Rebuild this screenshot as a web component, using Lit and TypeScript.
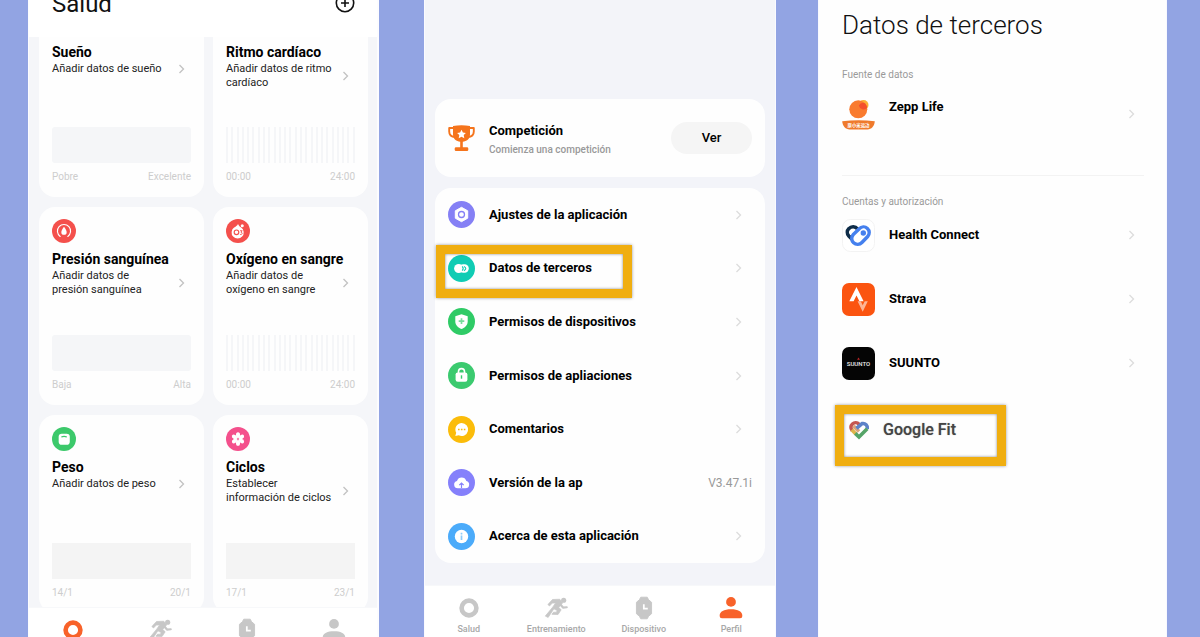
import { LitElement, html, css, svg, nothing, TemplateResult } from "lit";
import { customElement, property } from "lit/decorators.js";
import { classMap } from "lit/directives/class-map.js";

const reset = css`
  * { box-sizing: border-box; margin: 0; padding: 0; }
  a { color: inherit; text-decoration: none; }
  ul { list-style: none; }
  svg { display: block; flex: none; }
`;

const chevron = (dark = false) => html`
  <svg width="8" height="12" viewBox="0 0 8 12" fill="none" stroke=${dark ? "#c2c2c2" : "#dcdcdc"} stroke-width="1.3" aria-hidden="true">
    <path d="M1.500 2 5.500 6l-4 4" />
  </svg>`;

const disc = (size: number, color: string, glyph: TemplateResult) => html`
  <svg width=${size} height=${size} viewBox="0 0 27 27" aria-hidden="true">
    <circle cx="13.500" cy="13.500" r="13.500" fill=${color} />${glyph}
  </svg>`;

const glyphs: Record<string, TemplateResult> = {
  pressure: svg`<path d="M9.200 19.600a7.400 7.400 0 1 1 8.600 0" fill="none" stroke="#fff" stroke-width="1.300" stroke-linecap="round"/><path d="M13.500 8.800c1.800 2.600 3 4.200 3 6a3 3 0 0 1-6 0c0-1.800 1.200-3.400 3-6z" fill="#fff"/>`,
  oxygen: svg`<path d="M13.500 5.500c1 2.200 2.200 3 3.600 4.200a6.800 6.800 0 1 1-8 0c1.600-1.300 3.600-2.200 4.400-4.200z" fill="#fff"/><circle cx="18.300" cy="7.500" r="1.700" fill="#fff"/><circle cx="11.800" cy="15" r="2.600" fill="none" stroke="#f4504c" stroke-width="1.300"/><path d="M15.800 13.200h2.400l-1.300 1.700c1.800.1 1.700 2.500-.2 2.500h-1" fill="none" stroke="#f4504c" stroke-width="1"/>`,
  weight: svg`<rect x="7.500" y="7.500" width="12.500" height="12.500" rx="3.500" fill="#fff"/><path d="M10.500 11.300q3-1.500 6.200 0" fill="none" stroke="#3cc96b" stroke-width="1.300"/>`,
  cycle: svg`${[0, 60, 120, 180, 240, 300].map((a) => svg`<ellipse cx="13.500" cy="9" rx="2.300" ry="3.200" fill="#fff" transform="rotate(${a} 13.500 13.500)"/>`)}<circle cx="13.500" cy="13.500" r="2" fill="#fff"/><circle cx="13.500" cy="13.500" r="1" fill="#f4508c"/>`,
  settings: svg`<path d="M13.500 6.300l6.200 3.500v7.400l-6.200 3.500-6.200-3.500V9.800z" fill="#fff" stroke="#fff" stroke-linejoin="round"/><circle cx="13.500" cy="13.500" r="3" fill="none" stroke="#8580f5" stroke-width="1.300"/>`,
  third: svg`<circle cx="10.700" cy="13.500" r="4.600" fill="#fff"/><rect x="11" y="9.300" width="9.800" height="8.400" rx="4.200" fill="#fff"/><path d="M14.200 11.400q2 2.100 0 4.300M16 11.400q3.600 2.100 0 4.300" fill="none" stroke="#10ccb4" stroke-width="1.100"/>`,
  shield: svg`<path d="M13.500 6.200l6.200 2v5.300c0 3.600-2.600 6-6.200 7.500-3.600-1.500-6.200-3.900-6.200-7.500V8.200z" fill="#fff"/><path d="M13.500 10.300v5.600M10.700 13.100h5.600" stroke="#2fcb66" stroke-width="1.700" opacity=".65"/>`,
  lock: svg`<path d="M10.500 11V9.600a3 3 0 0 1 6 0V11" fill="none" stroke="#fff" stroke-width="1.600"/><rect x="7.600" y="10.400" width="11.800" height="9.400" rx="2.200" fill="#fff"/><path d="M13.500 13.300v3.400" stroke="#3bca6f" stroke-width="1.400"/>`,
  chat: svg`<path d="M13.700 7a6.500 6.500 0 1 1-3 12.300L7.300 20l.9-3.300A6.500 6.500 0 0 1 13.700 7z" fill="#fff"/><path d="M10 13.500h1.600M12.900 13.500h1.600M15.800 13.500h1.600" stroke="#fbbc0a" stroke-width="1.400"/>`,
  cloud: svg`<path d="M9.800 19.200a3.700 3.700 0 0 1-.8-7.300 4.900 4.900 0 0 1 9.300 0 3.700 3.700 0 0 1-.8 7.300z" fill="#fff"/><path d="M13.500 19v-4.500M11.300 16.200l2.200-2.200 2.200 2.200" fill="none" stroke="#8580fb" stroke-width="1.200"/>`,
  info: svg`<circle cx="13.500" cy="13.500" r="6.700" fill="#fff"/><path d="M13.500 12.500v4.600M13.500 9.700v1.700" stroke="#8ccbfa" stroke-width="1.700"/>`,
};

const tabShapes: Record<string, TemplateResult> = {
  salud: svg`<circle cx="12" cy="12" r="8" fill="none" stroke="currentColor" stroke-width="5"/>`,
  entrenamiento: svg`<circle cx="20.300" cy="3.600" r="2.800" fill="currentColor"/><path d="M8.200 2.800 16 2.500l3.300 3.800-4.300 5.200 2.600 2.400-3.400 5.200-6.600-.2 1.600-2.300 3.300-.1.800-1.700-3.600-1.900L3.500 22.200.400 20.800l8-9.700 3.200-4.600-3.600.2-3 3.100-1.800-1.500z" fill="currentColor" stroke="currentColor" stroke-width=".8" stroke-linejoin="round"/><path d="M17 8.500l2.600 3 4-.3" fill="none" stroke="currentColor" stroke-width="2.400" stroke-linecap="round" stroke-linejoin="round"/>`,
  dispositivo: svg`<path d="M8.500.300h7l1.500 2.800 3.200 2.700v12.400L17 20.900l-1.500 2.800h-7L7 20.900l-3.200-2.700V5.800L7 3.100z" fill="currentColor" stroke="currentColor" stroke-linejoin="round"/><path d="M11.800 8v4.800h4.300" fill="none" stroke="#fff" stroke-width="1.900"/>`,
  perfil: svg`<circle cx="12" cy="5.400" r="5.300" fill="currentColor"/><path d="M-.3 20.600c0-4.800 4.600-7.200 12.300-7.200s12.300 2.400 12.300 7.200q0 2.400-2.400 2.400H2.100q-2.400 0-2.400-2.400z" fill="currentColor"/>`,
};

@customElement("tab-bar")
class TabBar extends LitElement {
  @property() active = "salud";
  @property({ type: Boolean }) compact = false;

  static styles = [reset, css`
    :host { display: block; flex: none; background: #fff; color: #c7c7c7; border-top: 1px solid #f7f8fa; }
    .bar { display: grid; grid-template-columns: repeat(4, 1fr); height: 51px; padding-top: 10px; }
    .bar.compact { height: 29px; overflow: hidden; }
    .tab { display: flex; flex-direction: column; align-items: center; gap: 3px; font: 500 9px/12px Roboto, sans-serif; color: #a8a8a8; }
    .tab svg { color: #c7c7c7; }
    .tab.active svg { color: #f8622a; }
  `];

  render() {
    const tabs = ["Salud", "Entrenamiento", "Dispositivo", "Perfil"];
    return html`<nav class=${classMap({ bar: true, compact: this.compact })}>
      ${tabs.map((t) => {
        const key = t.toLowerCase();
        return html`<a class=${classMap({ tab: true, active: key === this.active })} href="#${key}" aria-label=${t}>
          <svg width="24" height="24" viewBox="-1 -1 26 26" aria-hidden="true">${tabShapes[key]}</svg>
          ${this.compact ? nothing : html`<span>${t}</span>`}
        </a>`;
      })}
    </nav>`;
  }
}

interface Metric {
  title: string; sub: string; from: string; to: string;
  icon?: string; color?: string; chart: "block" | "stripes" | "flat";
}

const metrics: Metric[] = [
  { title: "Sueño", sub: "Añadir datos de sueño", from: "Pobre", to: "Excelente", chart: "block" },
  { title: "Ritmo cardíaco", sub: "Añadir datos de ritmo\ncardíaco", from: "00:00", to: "24:00", chart: "stripes" },
  { title: "Presión sanguínea", sub: "Añadir datos de\npresión sanguínea", from: "Baja", to: "Alta", icon: "pressure", color: "#f4504c", chart: "block" },
  { title: "Oxígeno en sangre", sub: "Añadir datos de\noxígeno en sangre", from: "00:00", to: "24:00", icon: "oxygen", color: "#f4504c", chart: "stripes" },
  { title: "Peso", sub: "Añadir datos de peso", from: "14/1", to: "20/1", icon: "weight", color: "#3cc96b", chart: "flat" },
  { title: "Ciclos", sub: "Establecer\ninformación de ciclos", from: "17/1", to: "23/1", icon: "cycle", color: "#f4508c", chart: "flat" },
];

@customElement("health-screen")
class HealthScreen extends LitElement {
  static styles = [reset, css`
    :host { display: flex; flex-direction: column; min-width: 0; overflow: hidden; background: #f5f6f9; border: solid #fcfcff; border-width: 0 2px 0 1px; font-family: Roboto, sans-serif; color: #000; }
    .head { display: flex; flex: none; justify-content: space-between; align-items: flex-end; height: 37px; padding: 0 22px 17px 23px; background: #fff; }
    h1 { font-size: 24px; line-height: 32px; font-weight: 400; color: #111; }
    .add { border: 0; background: none; margin-bottom: 7px; }
    .cards { flex: 1; min-height: 0; overflow: hidden; display: grid; grid-template-columns: 165fr 155fr; grid-template-rows: 160px 198px 198px; gap: 10px 9px; padding: 0 9px 0 10px; }
    .card { display: flex; flex-direction: column; background: #fefefe; border-radius: 16px; padding: 12px 13px 14px 13px; min-width: 0; }
    .card.cut { border-radius: 0 0 16px 16px; padding-top: 6px; }
    .card svg + h2 { margin-top: 7px; }
    h2 { font-size: 14px; line-height: 18px; font-weight: 700; white-space: nowrap; }
    .sub { display: flex; align-items: center; justify-content: space-between; margin-top: 1px; font-size: 11px; line-height: 14px; color: #222; padding-right: 5px; }
    .sub span { white-space: pre; }
    .chart { height: 36px; margin-top: auto; }
    .block { background: #f5f6f8; border-radius: 3px; }
    .flat { background: #f4f4f4; }
    .stripes { display: flex; justify-content: space-between; }
    .stripes i { width: 2px; background: #f5f6f8; }
    .range { display: flex; justify-content: space-between; margin-top: 8px; font-size: 10px; line-height: 12px; color: #cdcdcd; }
  `];

  render() {
    return html`
      <header class="head">
        <h1>Salud</h1>
        <button class="add" aria-label="Añadir">
          <svg width="20" height="20" viewBox="0 0 20 20" fill="none" stroke="#111" stroke-width="1.600"><circle cx="10" cy="10" r="8.700"/><path d="M10 6v8M6 10h8"/></svg>
        </button>
      </header>
      <main class="cards">
        ${metrics.map((m) => html`
          <a class=${classMap({ card: true, cut: !m.icon })} href="#">
            ${m.icon ? disc(24, m.color!, glyphs[m.icon]) : nothing}
            <h2>${m.title}</h2>
            <p class="sub"><span>${m.sub}</span>${chevron(true)}</p>
            <div class="chart ${m.chart}">${m.chart === "stripes" ? Array.from({ length: 25 }, () => html`<i></i>`) : nothing}</div>
            <p class="range"><span>${m.from}</span><span>${m.to}</span></p>
          </a>`)}
      </main>
      <tab-bar active="salud" compact></tab-bar>`;
  }
}

const options = [
  { label: "Ajustes de la aplicación", icon: "settings", color: "#8580f5" },
  { label: "Datos de terceros", icon: "third", color: "#10ccb4", marked: true },
  { label: "Permisos de dispositivos", icon: "shield", color: "#2fcb66" },
  { label: "Permisos de apliaciones", icon: "lock", color: "#3bca6f" },
  { label: "Comentarios", icon: "chat", color: "#fbbc0a" },
  { label: "Versión de la ap", icon: "cloud", color: "#8580fb", value: "V3.47.1i" },
  { label: "Acerca de esta aplicación", icon: "info", color: "#4babfa" },
];

@customElement("profile-screen")
class ProfileScreen extends LitElement {
  static styles = [reset, css`
    :host { display: flex; flex-direction: column; min-width: 0; background: #f3f4f9; border: solid #fafaff; border-width: 0 1px; font-family: Roboto, sans-serif; color: #000; }
    .body { flex: 1; display: flex; flex-direction: column; gap: 11px; padding: 99px 10px 0; }
    .card { background: #fefefe; border-radius: 16px; }
    .contest { display: flex; align-items: center; gap: 14px; height: 78px; padding: 0 13px; }
    .text { flex: 1; padding-top: 3px; }
    h2, .label { font-size: 13px; line-height: 18px; font-weight: 700; }
    .text p { margin-top: 2px; font-size: 10px; line-height: 16px; font-weight: 500; color: #999; }
    .view { width: 81px; height: 32px; border: 0; border-radius: 16px; background: #f5f5f5; font: 500 13px/16px Roboto, sans-serif; color: #000; }
    .list { display: flex; flex-direction: column; height: 375px; }
    .item { flex: 1; display: flex; position: relative; }
    .link { flex: 1; display: flex; align-items: center; gap: 14px; padding: 0 13px; }
    .label { flex: 1; }
    .link > svg:last-child { margin-right: 9px; }
    .value { font-size: 12px; color: #999; }
    .mark { position: absolute; left: 1px; top: 3px; width: 196px; height: 53px; border: 9px solid #f0ae10; box-shadow: 0 0 3px #0006, inset 0 0 3px #0007; pointer-events: none; }
  `];

  render() {
    return html`
      <main class="body">
        <section class="card contest">
          <svg width="27" height="27" viewBox="0 0 27 27" aria-hidden="true">
            <path d="M6 3H1.200v3.500c0 3.500 2.500 5.300 6 5.500M21 3h4.800v3.500c0 3.500-2.500 5.300-6 5.500" fill="none" stroke="#f5741c" stroke-width="1.900" stroke-linejoin="round"/>
            <path d="M5 1q8.500-1.500 17 0v8.500c0 4.500-3.500 6.800-7.200 7.200v5.600H19q1.300 0 1.300 1.200v1.300q0 1.200-1.300 1.200H8q-1.300 0-1.300-1.200v-1.300q0-1.200 1.300-1.200h4.200v-5.600C8.500 16.300 5 14 5 9.500z" fill="#f5741c"/>
            <path d="M13.500 4.800l1.400 2.800 3 .4-2.200 2.100.6 3.100-2.800-1.500-2.800 1.500.6-3.100L9.100 8l3-.4z" fill="#fff"/>
          </svg>
          <div class="text"><h2>Competición</h2><p>Comienza una competición</p></div>
          <button class="view">Ver</button>
        </section>
        <ul class="card list">
          ${options.map((o) => html`
            <li class="item">
              <a class="link" href="#">
                ${disc(27, o.color, glyphs[o.icon])}
                <span class="label">${o.label}</span>
                ${o.value ? html`<span class="value">${o.value}</span>` : chevron()}
              </a>
              ${o.marked ? html`<span class="mark"></span>` : nothing}
            </li>`)}
        </ul>
      </main>
      <tab-bar active="perfil"></tab-bar>`;
  }
}

const zepp = html`
  <svg width="33" height="33" viewBox="0 0 33 33" aria-hidden="true">
    <circle cx="21.500" cy="7" r="5" fill="#fbb034"/><circle cx="16.300" cy="11.300" r="9" fill="#f97b2f"/>
    <path d="M16.800 7.500a5 5 0 0 1 6.500-2 9 9 0 0 1 1.800 4.500 5 5 0 0 1-8.300-2.500z" fill="#f4502c"/>
    <path d="M.2 23.300q16.300-2 32.600 0c-.4 5-3.500 8.200-7.300 8.200h-18C3.700 31.500.6 28.300.2 23.300z" fill="#ef7a2c"/>
    <text x="16.500" y="28.700" text-anchor="middle" font-size="4.400" font-family="Noto Sans CJK SC, sans-serif" fill="#fff">原小米运动</text>
  </svg>`;

const healthConnect = html`
  <svg width="33" height="33" viewBox="0 0 33 33" aria-hidden="true">
    <rect x=".5" y=".5" width="32" height="32" rx="8" fill="#fff" stroke="#f3f3f3"/>
    <path d="M15.500 9.800a5.600 5.600 0 0 0-8.600-.2 5.300 5.300 0 0 0-.1 7.400l4 4" fill="none" stroke="#0e2c48" stroke-width="3.600"/>
    <path d="M11.300 15.500l6-5.800a5.700 5.700 0 0 1 8.400 7.800l-5.800 6a5.800 5.800 0 0 1-8.600-8z" fill="#fff" stroke="#4580ee" stroke-width="3.400"/>
    <circle cx="21.300" cy="14" r="2.700" fill="#4580ee"/>
  </svg>`;

const strava = html`
  <svg width="33" height="33" viewBox="0 0 33 33" aria-hidden="true">
    <rect width="33" height="33" rx="7" fill="#fb5410"/>
    <path d="M14.500 4 7.300 18.200h4.300l2.900-5.700 2.900 5.700h4.200z" fill="#fff"/>
    <path d="M15.600 18.300h3.200l1.900 4 2-4h3.100l-5.100 10.500z" fill="#fdb596"/>
  </svg>`;

const suunto = html`
  <svg width="33" height="33" viewBox="0 0 33 33" aria-hidden="true">
    <rect width="33" height="33" rx="7" fill="#050505"/>
    <path d="M16.500 10.500l1.400 2.200h-2.800z" fill="#c02626"/>
    <text x="16.500" y="18.800" text-anchor="middle" font-size="6" font-weight="500" font-family="Roboto, sans-serif" fill="#eee">SUUNTO</text>
  </svg>`;

const fit = html`
  <svg width="22" height="20" viewBox="0 0 22 20" fill="none" stroke-width="3.600" aria-hidden="true">
    <path d="M11 11.500 5.500 6" stroke="#d9a57a"/>
    <path d="M4.200 10.500a4.600 4.600 0 0 1 6.800-6.300l1 1" stroke="#c4564f"/>
    <path d="M8.500 8.300 14 3.600a4.400 4.400 0 0 1 5.300 5.300" stroke="#5c82c8"/>
    <path d="M3.800 9.800l4 4.200" stroke="#ddb44a"/>
    <path d="M19.200 8.800 11 17 7.300 13.400" stroke="#55a468"/>
  </svg>`;

@customElement("sources-screen")
class SourcesScreen extends LitElement {
  static styles = [reset, css`
    :host { display: block; min-width: 0; background: #fefefe; border: solid #f8f9ff; border-width: 0 1px; padding: 9px 22px 0 23px; font-family: Roboto, sans-serif; color: #000; }
    h1 { font-size: 26px; line-height: 32px; font-weight: 300; color: #111; }
    h2 { font-size: 10px; line-height: 14px; font-weight: 400; color: #9a9a9a; }
    .first { margin-top: 27px; padding-bottom: 29px; border-bottom: 1px solid #f3f3f3; }
    .second { margin-top: 19px; }
    .row { display: flex; align-items: center; gap: 14px; height: 64px; padding-right: 8px; font-size: 13px; line-height: 18px; font-weight: 700; }
    .row span { flex: 1; }
    .row.raised span { align-self: flex-start; padding-top: 16px; }
    .second ul { margin-top: -6px; }
    .fit { display: flex; align-items: center; gap: 13px; width: 171px; height: 61px; margin: 10px 0 0 -7px; padding: 0 4px 11px; border: 9px solid #f0ae10; box-shadow: 0 0 3px #0006, inset 0 0 3px #0007; font-size: 16px; line-height: 18px; font-weight: 500; color: #444; text-shadow: 0 0 1px #4448; }
  `];

  render() {
    const row = (icon: TemplateResult, name: string, raised = false) => html`
      <a class=${classMap({ row: true, raised })} href="#">${icon}<span>${name}</span>${chevron()}</a>`;
    return html`
      <h1>Datos de terceros</h1>
      <section class="first"><h2>Fuente de datos</h2>${row(zepp, "Zepp Life", true)}</section>
      <section class="second">
        <h2>Cuentas y autorización</h2>
        <ul>
          <li>${row(healthConnect, "Health Connect")}</li>
          <li>${row(strava, "Strava")}</li>
          <li>${row(suunto, "SUUNTO")}</li>
          <li><a class="fit" href="#">${fit}<span>Google Fit</span></a></li>
        </ul>
      </section>`;
  }
}

@customElement("app-root")
class AppRoot extends LitElement {
  static styles = css`
    :host { display: grid; grid-template-columns: 351fr 355fr 349fr; gap: 42px; box-sizing: border-box; height: 100vh; padding: 0 33px 0 28px; background: #92a4e3; overflow: hidden; }
    profile-screen { margin-left: 3px; }
  `;

  render() {
    return html`<health-screen></health-screen><profile-screen></profile-screen><sources-screen></sources-screen>`;
  }
}
